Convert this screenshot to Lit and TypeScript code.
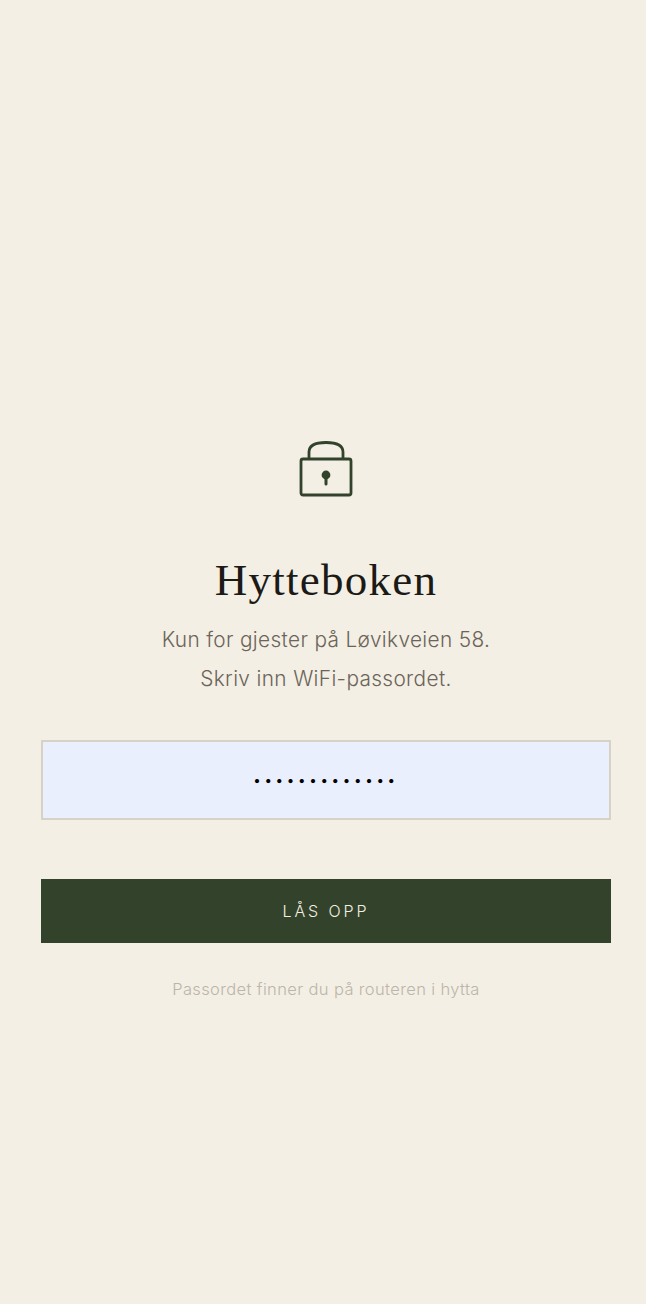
import { LitElement, html, css } from "lit";
import { customElement } from "lit/decorators.js";

@customElement("app-root")
export class AppRoot extends LitElement {
  static styles = css`
    :host { display: block; }
    .page {
      box-sizing: border-box; height: 1304px; background: #f3efe4;
      display: flex; flex-direction: column; align-items: center; justify-content: flex-start;
      padding: 438px 35px 0 41px;
      font-family: Inter, "Liberation Sans", sans-serif;
    }
    .lock { display: block; width: 56px; height: 60px; margin-bottom: 55px; }
    h1 {
      margin: 0 0 13px; font-family: "Liberation Serif", serif; font-weight: 400;
      font-size: 45px; line-height: 54px; letter-spacing: 1.25px; color: #1c1a16;
    }
    p.sub {
      margin: 0 0 42px; text-align: center; font-size: 20.8px; font-weight: 300;
      line-height: 39px; letter-spacing: 0.36px; color: #6b645a;
    }
    input {
      box-sizing: border-box; display: block; width: 570px; height: 80px;
      background: #e9effd; border: 2px solid #d8d1c6; outline: none; padding: 0;
      text-align: center; font-family: Inter, sans-serif; font-size: 13.33px; letter-spacing: 3.7px; color: #000;
      margin-bottom: 59px;
    }
    button {
      display: block; width: 570px; height: 64px; border: 0; padding: 0; background: #33432b;
      color: #f3efe4; font-family: Inter, sans-serif; font-size: 16px; font-weight: 300;
      letter-spacing: 2.9px; margin-bottom: 35px;
    }
    .hint { margin: 0; font-size: 16.5px; font-weight: 300; line-height: 22px; color: #bbb5aa; letter-spacing: 0.37px; }
  `;
  render() {
    return html`
      <main class="page">
        <svg class="lock" viewBox="0 0 56 60" fill="none" stroke="#33432b" stroke-width="2.8" stroke-linejoin="round">
          <rect x="3" y="21" width="50" height="36" rx="2" />
          <path d="M11 21V14C11 7 18 4.5 28 4.5S45 7 45 14V21" />
          <circle cx="28" cy="37" r="4.4" fill="#33432b" stroke="none" />
          <path d="M28 38V46" stroke-linecap="round" stroke-width="3" />
        </svg>
        <h1>Hytteboken</h1>
        <p class="sub">Kun for gjester på Løvikveien 58.<br />Skriv inn WiFi-passordet.</p>
        <input type="password" value="1234567890123" aria-label="Passord" />
        <button type="button">LÅS OPP</button>
        <p class="hint">Passordet finner du på routeren i hytta</p>
      </main>
    `;
  }
}
